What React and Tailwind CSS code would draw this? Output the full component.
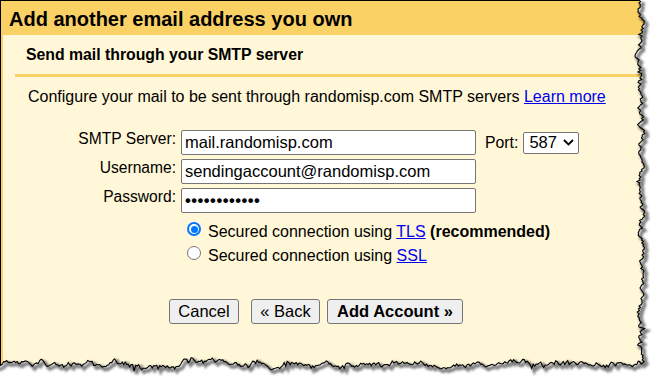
import React from 'react';

// deterministic jitter so the torn edge looks the same on every render
function makeRand(seed) {
  let s = seed;
  return () => {
    s = (s * 16807) % 2147483647;
    return (s - 1) / 2147483646;
  };
}

function buildEdge() {
  const rand = makeRand(1234);
  const pts = [];
  let x = 641;
  for (let y = 0; y <= 364; y += 1.5) {
    x += (641 - x) * 0.15 + (rand() - 0.5) * 4;
    const spike = rand() < 0.08 ? (rand() - 0.5) * 7 : 0;
    pts.push([x + (rand() - 0.5) * 2.2 + spike, y]);
  }
  let y = 364;
  const startX = pts[pts.length - 1][0];
  for (let xx = startX - 1.5; xx >= -4; xx -= 1.5) {
    y += (364 - y) * 0.15 + (rand() - 0.5) * 4;
    const spike = rand() < 0.08 ? (rand() - 0.5) * 7 : 0;
    pts.push([xx, y + (rand() - 0.5) * 2.2 + spike]);
  }
  return pts.map(([a, b], i) => `${i ? 'L' : 'M'}${a.toFixed(1)} ${b.toFixed(1)}`).join(' ');
}

const EDGE = buildEdge();
const OUTSIDE = `${EDGE} L-4 390 L664 390 L664 -4 L641 -4 Z`;

function TornEdge() {
  return (
    <svg className="absolute inset-0 pointer-events-none" width="658" height="381" viewBox="0 0 658 381">
      <defs>
        <filter id="blur" x="-10%" y="-10%" width="120%" height="120%">
          <feGaussianBlur stdDeviation="1.3" />
        </filter>
      </defs>
      <path d={OUTSIDE} fill="#ffffff" />
      <path d={EDGE} fill="none" stroke="rgba(0,0,0,0.5)" strokeWidth="3.5" transform="translate(2.5,2.5)" filter="url(#blur)" />
      <path d={EDGE} fill="none" stroke="#000" strokeWidth="1.1" />
    </svg>
  );
}

function Field({ label, value, children }) {
  return (
    <div className="flex items-start">
      <div className="w-[173px] text-right text-[15.6px] leading-[18px]">{label}</div>
      <div className="ml-[5px] w-[295px] h-[25px] bg-white border border-[#767676] rounded-[2px] px-[3px] flex items-center text-[16.5px] leading-[19px] whitespace-nowrap overflow-hidden">
        {value}
      </div>
      {children}
    </div>
  );
}

function Radio({ checked, children }) {
  return (
    <div className="flex items-start h-[23.5px] ml-[184px] text-[16px] leading-[23.5px]">
      {checked ? (
        <div className="mt-[2px] w-[14px] h-[14px] rounded-full bg-[#0075ff] flex items-center justify-center">
          <div className="w-[10px] h-[10px] rounded-full bg-white flex items-center justify-center">
            <div className="w-[7px] h-[7px] rounded-full bg-[#0075ff]" />
          </div>
        </div>
      ) : (
        <div className="mt-[2px] w-[14px] h-[14px] rounded-full bg-white border border-[#767676]" />
      )}
      <span className="ml-[7px] whitespace-nowrap">{children}</span>
    </div>
  );
}

export default function App() {
  return (
    <div className="relative w-[658px] h-[381px] overflow-hidden bg-white text-black font-['Liberation_Sans',Arial,sans-serif]">
      <div className="h-full flex flex-col border-t border-l border-black">
        <div className="h-[34px] shrink-0 bg-[#fad165] pl-[8px] pt-[7px] text-[20px] leading-[23px] font-bold whitespace-nowrap">
          Add another email address you own
        </div>
        <div className="flex-1 bg-[#fff7d7] border-l-2 border-[#fad165]">
          <div className="pl-[23px] pt-[10.5px] text-[15.8px] leading-[18px] font-bold">
            Send mail through your SMTP server
          </div>
          <div className="ml-[12px] mt-[10.5px] h-[3px] bg-[#fad165]" />
          <p className="mt-[11px] pl-[25px] text-[16px] leading-[18px] whitespace-nowrap">
            Configure your mail to be sent through randomisp.com SMTP servers{' '}
            <a className="text-[#0000ee] underline">Learn more</a>
          </p>

          <div className="mt-[24px] flex flex-col gap-[4px]">
            <Field label="SMTP Server:" value="mail.randomisp.com">
              <div className="ml-[9px] h-[25px] flex items-center">
                <span className="text-[15.8px] leading-[18px]">Port:</span>
                <div className="ml-[5px] w-[56px] h-[22px] bg-white border border-[#767676] rounded-[2px] flex items-center pl-[5px] text-[16.5px] leading-[19px]">
                  <span>587</span>
                  <svg className="ml-[6px]" width="11" height="7" viewBox="0 0 11 7">
                    <path d="M1 1 L5.5 5.5 L10 1" fill="none" stroke="#000" strokeWidth="1.8" />
                  </svg>
                </div>
              </div>
            </Field>
            <Field label="Username:" value="sendingaccount@randomisp.com" />
            <Field label="Password:" value={<span className="tracking-[0.5px] font-bold">••••••••••••</span>} />
          </div>

          <div className="mt-[7px]">
            <Radio checked>
              Secured connection using <a className="text-[#0000ee] underline">TLS</a>{' '}
              <b>(recommended)</b>
            </Radio>
            <Radio>
              Secured connection using <a className="text-[#0000ee] underline">SSL</a>
            </Radio>
          </div>

          <div className="mt-[32px] ml-[166px] flex text-[16.5px] leading-[19px]">
            <button className="w-[70px] h-[25px] bg-[#efefef] border border-[#767676] rounded-[3px]">Cancel</button>
            <button className="ml-[12px] w-[69px] h-[25px] bg-[#efefef] border border-[#767676] rounded-[3px]">« Back</button>
            <button className="ml-[7px] w-[136px] h-[25px] bg-[#efefef] border border-[#767676] rounded-[3px] font-bold">Add Account »</button>
          </div>
        </div>
      </div>
      <TornEdge />
    </div>
  );
}
